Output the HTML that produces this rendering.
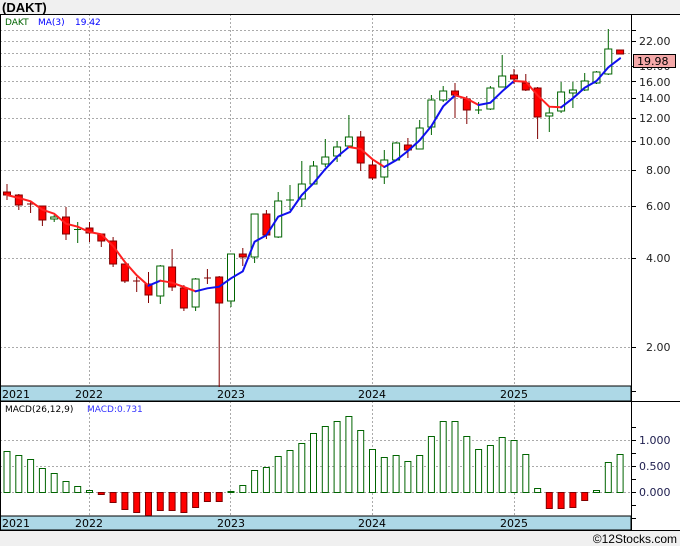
<!DOCTYPE html>
<html><head><meta charset="utf-8"><style>
html,body{margin:0;padding:0;background:#f0f0f0;}
svg{display:block;font-family:"DejaVu Sans","Liberation Sans",sans-serif;}
</style></head><body>
<svg width="680" height="546" viewBox="0 0 680 546" xmlns="http://www.w3.org/2000/svg">
<rect x="0" y="0" width="680" height="546" fill="#f0f0f0"/>
<text x="2" y="12" font-family="Liberation Sans, sans-serif" font-weight="bold" font-size="13" fill="#000">(DAKT)</text>
<rect x="0" y="14" width="680" height="516" fill="#fff"/>
<!-- grid main -->
<g stroke="#aaa" stroke-dasharray="2,2" stroke-width="1">
<line x1="0" y1="30.5" x2="631" y2="30.5"/><line x1="0" y1="41.5" x2="631" y2="41.5"/><line x1="0" y1="53.5" x2="631" y2="53.5"/><line x1="0" y1="66.5" x2="631" y2="66.5"/><line x1="0" y1="81.5" x2="631" y2="81.5"/><line x1="0" y1="98.5" x2="631" y2="98.5"/><line x1="0" y1="118.5" x2="631" y2="118.5"/><line x1="0" y1="141.5" x2="631" y2="141.5"/><line x1="0" y1="170.5" x2="631" y2="170.5"/><line x1="0" y1="206.5" x2="631" y2="206.5"/><line x1="0" y1="258.5" x2="631" y2="258.5"/><line x1="0" y1="347.5" x2="631" y2="347.5"/>
<line x1="89.5" y1="14" x2="89.5" y2="386"/><line x1="230.5" y1="14" x2="230.5" y2="386"/><line x1="372.5" y1="14" x2="372.5" y2="386"/><line x1="514.5" y1="14" x2="514.5" y2="386"/>
<line x1="0" y1="440.5" x2="631" y2="440.5"/><line x1="0" y1="466.5" x2="631" y2="466.5"/><line x1="0" y1="492.5" x2="631" y2="492.5"/>
<line x1="89.5" y1="401" x2="89.5" y2="516"/><line x1="230.5" y1="401" x2="230.5" y2="516"/><line x1="372.5" y1="401" x2="372.5" y2="516"/><line x1="514.5" y1="401" x2="514.5" y2="516"/>
</g>
<!-- bands -->
<rect x="0" y="386" width="631" height="15" fill="#add8e6" stroke="#000"/>
<rect x="0" y="516" width="631" height="14" fill="#add8e6" stroke="#000"/>
<g font-size="11" fill="#000">
<text x="2" y="398">2021</text><text x="75" y="398">2022</text><text x="217" y="398">2023</text><text x="358" y="398">2024</text><text x="500" y="398">2025</text>
<text x="2" y="527">2021</text><text x="75" y="527">2022</text><text x="217" y="527">2023</text><text x="358" y="527">2024</text><text x="500" y="527">2025</text>
</g>
<!-- frame -->
<g stroke="#000" stroke-width="1" fill="none">
<line x1="0" y1="14.5" x2="680" y2="14.5"/>
<line x1="0.5" y1="14" x2="0.5" y2="530"/>
<line x1="631.5" y1="14" x2="631.5" y2="530"/>
<line x1="0" y1="401.5" x2="680" y2="401.5"/>
<line x1="0" y1="530.5" x2="680" y2="530.5"/>
</g>
<!-- ticks -->
<g stroke="#000">
<line x1="631" y1="30.5" x2="636" y2="30.5"/><line x1="631" y1="41.5" x2="636" y2="41.5"/><line x1="631" y1="66.5" x2="636" y2="66.5"/><line x1="631" y1="81.5" x2="636" y2="81.5"/><line x1="631" y1="98.5" x2="636" y2="98.5"/><line x1="631" y1="118.5" x2="636" y2="118.5"/><line x1="631" y1="141.5" x2="636" y2="141.5"/><line x1="631" y1="170.5" x2="636" y2="170.5"/><line x1="631" y1="206.5" x2="636" y2="206.5"/><line x1="631" y1="258.5" x2="636" y2="258.5"/><line x1="631" y1="347.5" x2="636" y2="347.5"/><line x1="631" y1="391.5" x2="636" y2="391.5"/>
<line x1="631" y1="427.5" x2="636" y2="427.5"/><line x1="631" y1="440.5" x2="636" y2="440.5"/><line x1="631" y1="453.5" x2="636" y2="453.5"/><line x1="631" y1="466.5" x2="636" y2="466.5"/><line x1="631" y1="479.5" x2="636" y2="479.5"/><line x1="631" y1="492.5" x2="636" y2="492.5"/><line x1="631" y1="505.5" x2="636" y2="505.5"/><line x1="631" y1="518.5" x2="636" y2="518.5"/>
</g>
<g font-size="11" fill="#222">
<text x="639" y="45">22.00</text><text x="639" y="70">18.00</text><text x="639" y="86">16.00</text><text x="639" y="102">14.00</text><text x="639" y="122">12.00</text><text x="639" y="145">10.00</text><text x="646" y="174">8.00</text><text x="646" y="210">6.00</text><text x="646" y="262">4.00</text><text x="646" y="351">2.00</text>
<text x="639" y="444" fill="#202050">1.000</text><text x="639" y="470" fill="#202050">0.500</text><text x="639" y="496" fill="#202050">0.000</text>
</g>
<rect x="633.5" y="54.5" width="42" height="13" fill="#f4a8a8" stroke="#000"/>
<text x="637" y="65" font-size="11" fill="#000">19.98</text>
<!-- legend -->
<g font-size="9">
<text x="5" y="25" fill="#006400">DAKT</text><text x="38" y="25" fill="#0000ff">MA(3)</text><text x="75" y="25" fill="#0000ff">19.42</text>
<text x="5" y="412" fill="#000">MACD(26,12,9)</text><text x="87" y="412" fill="#3333ff">MACD:0.731</text>
</g>
<!-- candles -->
<g stroke-width="1">
<g stroke="#800000" fill="#ff0000">
<line x1="7" y1="184" x2="7" y2="200"/><rect x="3.5" y="192" width="7" height="3"/>
<line x1="18.8" y1="194" x2="18.8" y2="210"/><rect x="15.3" y="195" width="7" height="10"/>
<line x1="30.6" y1="202" x2="30.6" y2="213"/><line x1="27" y1="204" x2="34" y2="204"/>
<line x1="42.4" y1="206" x2="42.4" y2="226"/><rect x="38.9" y="206" width="7" height="14"/>
<line x1="66" y1="207" x2="66" y2="240"/><rect x="62.5" y="217" width="7" height="17"/>
<line x1="89.5" y1="222" x2="89.5" y2="242"/><rect x="86" y="228" width="7" height="5"/>
<line x1="101.3" y1="234" x2="101.3" y2="247"/><rect x="97.8" y="234" width="7" height="7"/>
<line x1="113.1" y1="237" x2="113.1" y2="267"/><rect x="109.6" y="241" width="7" height="23"/>
<line x1="124.9" y1="264" x2="124.9" y2="283"/><rect x="121.4" y="264" width="7" height="17"/>
<line x1="136.7" y1="277" x2="136.7" y2="292"/><line x1="133" y1="281" x2="140" y2="281"/>
<line x1="148.5" y1="272" x2="148.5" y2="303"/><rect x="145" y="284" width="7" height="11"/>
<line x1="172.1" y1="249" x2="172.1" y2="291"/><rect x="168.6" y="267" width="7" height="20"/>
<line x1="183.9" y1="285" x2="183.9" y2="311"/><rect x="180.4" y="288" width="7" height="20"/>
<line x1="207.4" y1="269" x2="207.4" y2="284"/><line x1="204" y1="278" x2="211" y2="278"/>
<line x1="219.2" y1="276" x2="219.2" y2="387"/><rect x="215.7" y="277" width="7" height="26"/>
<line x1="242.8" y1="248" x2="242.8" y2="266"/><rect x="239.3" y="254" width="7" height="3"/>
<line x1="266.4" y1="210" x2="266.4" y2="239"/><rect x="262.9" y="214" width="7" height="21"/>
<line x1="360.7" y1="131" x2="360.7" y2="171"/><rect x="357.2" y="137" width="7" height="26"/>
<line x1="372.5" y1="160" x2="372.5" y2="180"/><rect x="369" y="165" width="7" height="13"/>
<line x1="407.9" y1="138" x2="407.9" y2="158"/><rect x="404.4" y="145" width="7" height="5"/>
<line x1="455" y1="83" x2="455" y2="118"/><rect x="451.5" y="91" width="7" height="4"/>
<line x1="466.8" y1="96" x2="466.8" y2="124"/><rect x="463.3" y="99" width="7" height="11"/>
<line x1="514" y1="69" x2="514" y2="84"/><rect x="510.5" y="75" width="7" height="4"/>
<line x1="525.8" y1="74" x2="525.8" y2="91"/><rect x="522.3" y="83" width="7" height="7"/>
<line x1="537.6" y1="87" x2="537.6" y2="139"/><rect x="534.1" y="88" width="7" height="29"/>
<rect x="616.6" y="50" width="7" height="4"/>
</g>
<g stroke="#006400" fill="#fff">
<line x1="54.2" y1="215" x2="54.2" y2="222"/><rect x="50.7" y="217" width="7" height="2"/>
<line x1="77.7" y1="222" x2="77.7" y2="243"/><line x1="74" y1="229.5" x2="81" y2="229.5"/>
<line x1="160.3" y1="265" x2="160.3" y2="304"/><rect x="156.8" y="266" width="7" height="30"/>
<line x1="195.6" y1="278" x2="195.6" y2="311"/><rect x="192.1" y="279" width="7" height="28"/>
<line x1="231" y1="254" x2="231" y2="307"/><rect x="227.5" y="254" width="7" height="47"/>
<line x1="254.6" y1="214" x2="254.6" y2="263"/><rect x="251.1" y="214" width="7" height="43"/>
<line x1="278.2" y1="192" x2="278.2" y2="238"/><rect x="274.7" y="201" width="7" height="36"/>
<line x1="290" y1="185" x2="290" y2="210"/><line x1="286" y1="200" x2="294" y2="200"/>
<line x1="301.8" y1="161" x2="301.8" y2="207"/><rect x="298.3" y="184" width="7" height="15"/>
<line x1="313.5" y1="161" x2="313.5" y2="184"/><rect x="310" y="166" width="7" height="18"/>
<line x1="325.3" y1="139" x2="325.3" y2="167"/><rect x="321.8" y="157" width="7" height="7"/>
<line x1="337.1" y1="141" x2="337.1" y2="162"/><rect x="333.6" y="147" width="7" height="9"/>
<line x1="348.9" y1="115" x2="348.9" y2="146"/><rect x="345.4" y="137" width="7" height="9"/>
<line x1="384.3" y1="150" x2="384.3" y2="184"/><rect x="380.8" y="160" width="7" height="17"/>
<line x1="396.1" y1="142" x2="396.1" y2="160"/><rect x="392.6" y="143" width="7" height="17"/>
<line x1="419.7" y1="120" x2="419.7" y2="149"/><rect x="416.2" y="128" width="7" height="21"/>
<line x1="431.4" y1="95" x2="431.4" y2="135"/><rect x="427.9" y="100" width="7" height="27"/>
<line x1="443.2" y1="86" x2="443.2" y2="102"/><rect x="439.7" y="91" width="7" height="9"/>
<line x1="478.6" y1="102" x2="478.6" y2="114"/><line x1="475" y1="110" x2="482" y2="110"/>
<line x1="490.4" y1="86" x2="490.4" y2="110"/><rect x="486.9" y="88" width="7" height="21"/>
<line x1="502.2" y1="55" x2="502.2" y2="87"/><rect x="498.7" y="76" width="7" height="11"/>
<line x1="549.3" y1="107" x2="549.3" y2="132"/><rect x="545.8" y="113" width="7" height="3"/>
<line x1="561.1" y1="82" x2="561.1" y2="113"/><rect x="557.6" y="92" width="7" height="19"/>
<line x1="572.9" y1="82" x2="572.9" y2="108"/><rect x="569.4" y="90" width="7" height="3"/>
<line x1="584.7" y1="73" x2="584.7" y2="91"/><rect x="581.2" y="81" width="7" height="9"/>
<line x1="596.5" y1="71" x2="596.5" y2="84"/><rect x="593" y="72" width="7" height="11"/>
<line x1="608.3" y1="29" x2="608.3" y2="75"/><rect x="604.8" y="49" width="7" height="25"/>
</g>
</g>
<!-- MA -->
<g fill="none" stroke-width="2" stroke-linecap="round">
<polyline stroke="#ff2020" points="7,195 18.8,198 30.6,201.3 42.4,209.7 54.2,213.7 66,223.7 77.7,226.7 89.5,232 101.3,234.3 113.1,246 124.9,262 136.7,275.3 148.5,285.7"/>
<polyline stroke="#1010ee" points="148.5,285.7 160.3,280.7"/>
<polyline stroke="#ff2020" points="160.3,280.7 172.1,282.7 183.9,287 195.6,291.3"/>
<polyline stroke="#1010ee" points="195.6,291.3 207.4,288.3 219.2,286.7 231,278.3 242.8,271.3 254.6,241.7 266.4,235.3 278.2,216.7 290,212 301.8,195 313.5,183.3 325.3,169 337.1,156.7 348.9,147"/>
<polyline stroke="#ff2020" points="348.9,147 360.7,149 372.5,159.3 384.3,167"/>
<polyline stroke="#1010ee" points="384.3,167 396.1,160.3 407.9,151 419.7,140.3 431.4,126 443.2,106.3 455,95.3"/>
<polyline stroke="#ff2020" points="455,95.3 466.8,98.7 478.6,105"/>
<polyline stroke="#1010ee" points="478.6,105 490.4,102.7 502.2,91.3 514,81"/>
<polyline stroke="#ff2020" points="514,81 525.8,81.7 537.6,95.3 549.3,106.7 561.1,107.3"/>
<polyline stroke="#1010ee" points="561.1,107.3 572.9,98.3 584.7,87.7 596.5,81 608.3,67.3 620.1,58.3"/>
</g>
<!-- MACD bars -->
<g stroke="#006400" fill="#fff">
<rect x="4" y="451.5" width="6" height="41"/><rect x="15.8" y="455.5" width="6" height="37"/><rect x="27.6" y="459.5" width="6" height="33"/><rect x="39.4" y="468.5" width="6" height="24"/><rect x="51.2" y="473.5" width="6" height="19"/><rect x="63" y="481.5" width="6" height="11"/><rect x="74.7" y="486.5" width="6" height="6"/><rect x="86.5" y="490.5" width="6" height="2"/>
<rect x="228" y="491.5" width="6" height="1"/><rect x="239.8" y="485.5" width="6" height="7"/><rect x="251.6" y="470.5" width="6" height="22"/><rect x="263.4" y="467.5" width="6" height="25"/><rect x="275.2" y="456.5" width="6" height="36"/><rect x="287" y="450.5" width="6" height="42"/><rect x="298.8" y="443.5" width="6" height="49"/><rect x="310.5" y="433.5" width="6" height="59"/><rect x="322.3" y="426.5" width="6" height="66"/><rect x="334.1" y="421.5" width="6" height="71"/><rect x="345.9" y="416.5" width="6" height="76"/><rect x="357.7" y="430.5" width="6" height="62"/><rect x="369.5" y="449.5" width="6" height="43"/><rect x="381.3" y="457.5" width="6" height="35"/><rect x="393.1" y="455.5" width="6" height="37"/><rect x="404.9" y="461.5" width="6" height="31"/><rect x="416.7" y="455.5" width="6" height="37"/><rect x="428.4" y="436.5" width="6" height="56"/><rect x="440.2" y="421.5" width="6" height="71"/><rect x="452" y="421.5" width="6" height="71"/><rect x="463.8" y="436.5" width="6" height="56"/><rect x="475.6" y="449.5" width="6" height="43"/><rect x="487.4" y="445.5" width="6" height="47"/><rect x="499.2" y="437.5" width="6" height="55"/><rect x="511" y="440.5" width="6" height="52"/><rect x="522.8" y="454.5" width="6" height="38"/><rect x="534.6" y="488.5" width="6" height="4"/>
<rect x="593.5" y="490.5" width="6" height="2"/><rect x="605.3" y="462.5" width="6" height="30"/><rect x="617.1" y="454.5" width="6" height="38"/>
</g>
<g stroke="#800000" fill="#ff0000">
<rect x="98.3" y="492.5" width="6" height="2"/><rect x="110.1" y="492.5" width="6" height="10"/><rect x="121.9" y="492.5" width="6" height="17"/><rect x="133.7" y="492.5" width="6" height="20"/><rect x="145.5" y="492.5" width="6" height="23"/><rect x="157.3" y="492.5" width="6" height="18"/><rect x="169.1" y="492.5" width="6" height="18"/><rect x="180.9" y="492.5" width="6" height="20"/><rect x="192.6" y="492.5" width="6" height="15"/><rect x="204.4" y="492.5" width="6" height="9"/><rect x="216.2" y="492.5" width="6" height="9"/>
<rect x="546.3" y="492.5" width="6" height="16"/><rect x="558.1" y="492.5" width="6" height="16"/><rect x="569.9" y="492.5" width="6" height="15"/><rect x="581.7" y="492.5" width="6" height="8"/>
</g>
<text x="677" y="543" text-anchor="end" font-family="Liberation Sans, sans-serif" font-size="12" fill="#000">©12Stocks.com</text>
</svg>
</body></html>
